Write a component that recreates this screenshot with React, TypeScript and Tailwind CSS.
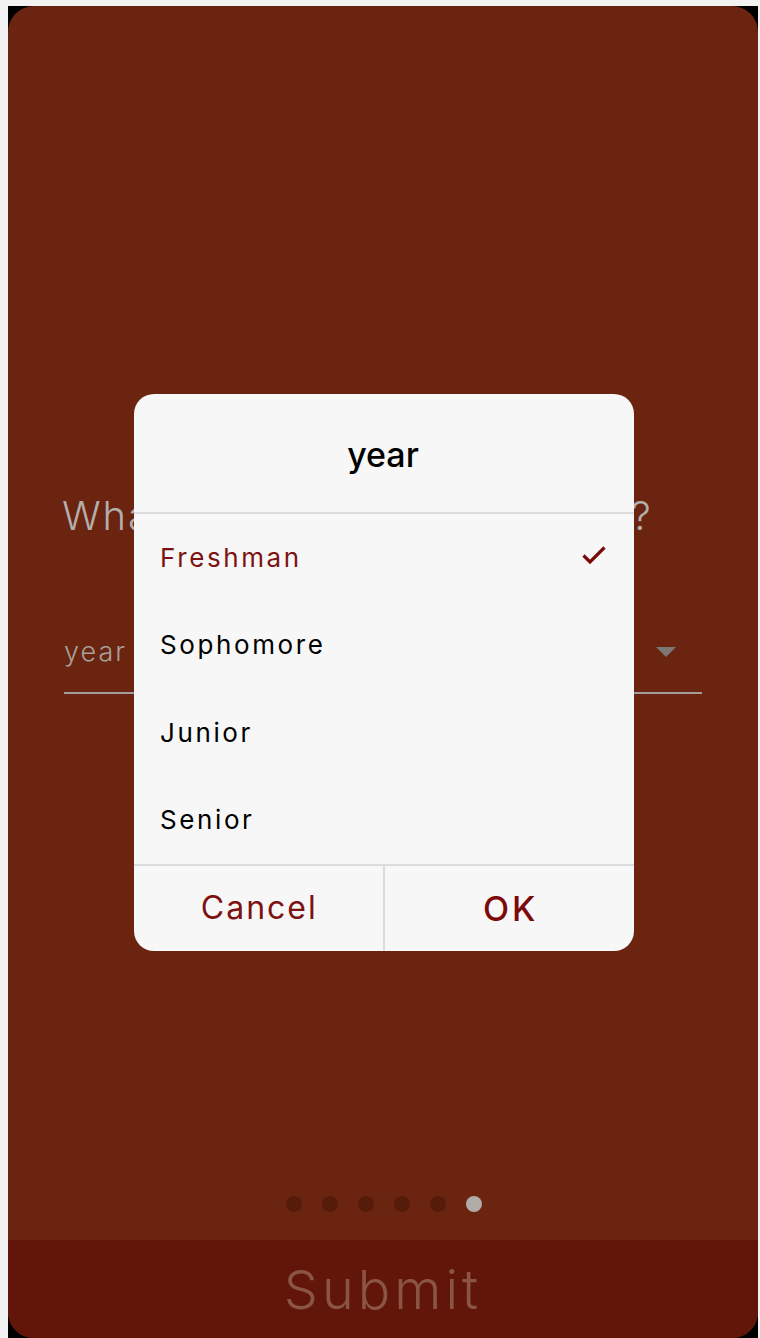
import React from 'react';

const YEARS = ['Freshman', 'Sophomore', 'Junior', 'Senior'];

const font = { fontFamily: 'Inter, "Noto Sans", sans-serif' };

export default function App() {
    const selected = 'Freshman';

    return (
        <div className="min-h-screen bg-[#f2f2f2] pt-[6px] pl-[8px] pr-[2px]" style={font}>
            <div className="h-[1332px] bg-black">
                <div className="relative flex h-full flex-col overflow-hidden rounded-[26px] bg-[#6a2410]">
                    {/* Question page */}
                    <div className="flex flex-1 flex-col px-[56px] pt-[486px]">
                        <h1 className="-ml-[2px] whitespace-nowrap text-[40px] font-light leading-[48px] tracking-[1.9px] text-[#b3aeab]">
                            What year are you in school?
                        </h1>
                        <div className="mt-[72px] flex h-[82px] items-center justify-between border-b-2 border-[#a39c99]">
                            <span className="text-[27px] font-light tracking-[2px] text-[#a8a09c]">year</span>
                            <span className="mr-[26px] h-0 w-0 border-x-[10px] border-t-[10px] border-x-transparent border-t-[#7b7775]" />
                        </div>
                    </div>

                    {/* Pager */}
                    <div className="mb-[28px] flex justify-center gap-[20px] pl-[2px]">
                        {[0, 1, 2, 3, 4, 5].map((i) => (
                            <span
                                key={i}
                                className={i === 5 ? 'h-4 w-4 rounded-full bg-[#b1aca8]' : 'h-4 w-4 rounded-full bg-[#561c09]'}
                            />
                        ))}
                    </div>

                    <button type="button" className="flex h-[98px] items-center justify-center bg-[#611609] text-[54px] font-light tracking-[4px] text-[#8b5546]">
                        Submit
                    </button>

                    {/* Picker dialog */}
                    <div className="absolute inset-0 flex items-center justify-center pl-[2px]">
                        <div className="flex h-[557px] w-[500px] flex-col overflow-hidden rounded-[20px] bg-[#f7f7f7]">
                            <div className="flex h-[120px] items-center justify-center border-b-2 border-[#dcdbde] pt-[4px] pr-[2px] text-[34px] font-medium text-black">
                                year
                            </div>
                            {YEARS.map((y) => (
                                <div key={y} className="flex h-[87.5px] items-center justify-between pl-[26px] pr-[28px]">
                                    <span className={y === selected ? 'text-[26px] tracking-[2.6px] text-[#7d1212]' : 'text-[26px] tracking-[2.6px] text-black'}>
                                        {y}
                                    </span>
                                    {y === selected && (
                                        <svg width="24" height="24" viewBox="0 0 24 24" fill="none">
                                            <path d="M1.5 10.5 L8 17 L22.5 2.5" stroke="#7d0a0a" strokeWidth="3.2" />
                                        </svg>
                                    )}
                                </div>
                            ))}
                            <div className="flex flex-1 border-t-2 border-[#dcdbde]">
                                <button type="button" className="flex-1 border-r-2 border-[#dcdbde] pl-[2px] text-[32px] tracking-[2px] text-[#7d1212]">
                                    Cancel
                                </button>
                                <button type="button" className="flex-1 pl-[3px] text-[34px] font-medium tracking-[3px] text-[#7d0a0a]">
                                    OK
                                </button>
                            </div>
                        </div>
                    </div>
                </div>
            </div>
        </div>
    );
}
